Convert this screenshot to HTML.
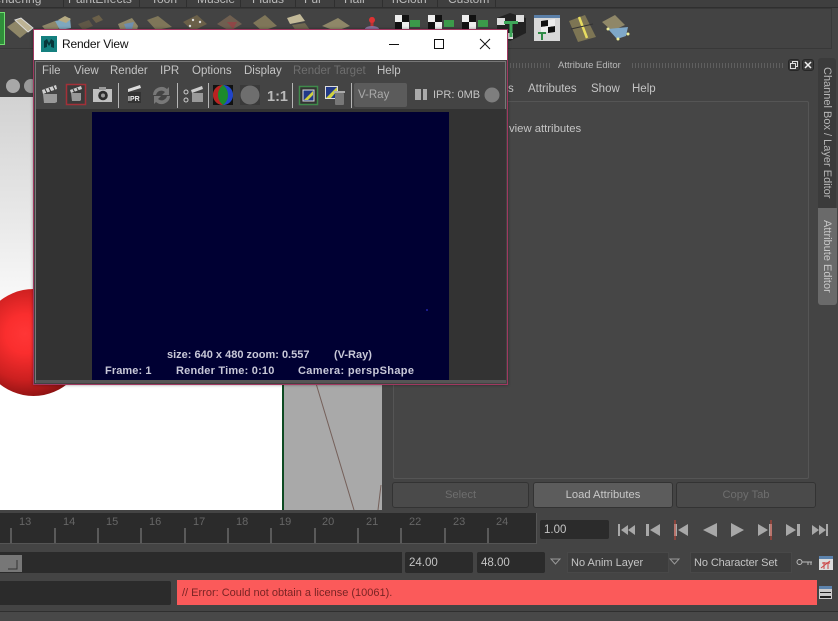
<!DOCTYPE html>
<html><head><meta charset="utf-8"><style>
html,body{margin:0;padding:0;background:#444}
#r{position:relative;width:838px;height:621px;overflow:hidden;background:#444;font-family:"Liberation Sans",sans-serif;font-size:11.5px;color:#c4c4c4}
#r div,#r span.a,#r svg{position:absolute}
.t{white-space:nowrap;line-height:14px}
.f{background:#2b2b2b;border-radius:2px}
.b{background:#4a4a4a;border:1px solid #333;border-radius:3px;text-align:center;line-height:24px;color:#6e6e6e;box-sizing:border-box;height:26px;top:482px;font-size:11.2px}
.o{font-size:11px;font-weight:700;color:#c8c8d8}
.dots{height:5px;background:repeating-linear-gradient(90deg,#5f5f5f 0 1px,transparent 1px 3px)}
</style></head><body><div id="r">
<!-- shelf tabs -->
<div style="left:0;top:0;width:838px;height:7px;background:#3f3f3f;border-bottom:1px solid #2f2f2f"></div>
<div class="t" style="left:-14px;top:-8px;color:#bbb;font-size:12px">Rendering</div>
<div class="t" style="left:68px;top:-8px;color:#bbb;font-size:12px">PaintEffects</div>
<div class="t" style="left:151px;top:-8px;color:#bbb;font-size:12px">Toon</div>
<div class="t" style="left:197px;top:-8px;color:#bbb;font-size:12px">Muscle</div>
<div class="t" style="left:252px;top:-8px;color:#bbb;font-size:12px">Fluids</div>
<div class="t" style="left:304px;top:-8px;color:#bbb;font-size:12px">Fur</div>
<div class="t" style="left:344px;top:-8px;color:#bbb;font-size:12px">Hair</div>
<div class="t" style="left:392px;top:-8px;color:#bbb;font-size:12px">nCloth</div>
<div class="t" style="left:448px;top:-8px;color:#bbb;font-size:12px">Custom</div>
<svg style="left:0;top:0" width="520" height="8"><path d="M63.500 0v7M139.500 0v7M186.500 0v7M240.500 0v7M295.500 0v7M334.500 0v7M382.500 0v7M437.500 0v7M495.500 0v7" stroke="#2f2f2f"/></svg>
<div style="left:0;top:8px;width:832px;height:41px;border:1px solid #383838;border-left:0;box-sizing:border-box;background:#434343"></div>
<div style="left:-6px;top:12px;width:9px;height:31px;background:#2f8f3a;border:1px solid #6fdc6f"></div>
<!-- shelf icons -->
<svg style="left:0;top:0;filter:blur(.35px)" width="640" height="50" viewBox="0 0 640 50">
<g fill="#8f8768">
<path d="M7 27 17 20 30 30 20 38Z"/><path d="M15 20 21 18 33 28 28 32Z" fill="#bdb394" stroke="#ddd"/>
<path d="M42 26 55 21 60 28 48 33Z"/><path d="M55 21 70 18 71 28 60 30Z" fill="#7fa8bf"/><path d="M58 20 65 16 71 19 66 23Z" fill="#b5aa82"/>
<path d="M78 24 89 20 93 26 83 30Z" fill="#5f5746"/><path d="M92 18 99 15 103 20 96 23Z" fill="#6b6049"/>
<path d="M118 24 132 18 138 26 136 34 122 34Z"/><path d="M124 24 134 22 132 29 126 29Z" fill="#6e8eb0"/>
<path d="M147 20 158 16 172 27 156 30Z" fill="#7f7659"/>
<path d="M183 22 197 15 207 24 193 31Z" fill="#6b6049"/><circle cx="193" cy="20" r="1.200" fill="#ddd"/><circle cx="200" cy="22" r="1.200" fill="#ddd"/><circle cx="190" cy="26" r="1.200" fill="#ddd"/>
<path d="M217 24 230 15 242 24 230 31Z" fill="#6f5f50"/><path d="M227 22 237 22 233 29Z" fill="#8f4747"/>
<path d="M253 23 265 15 277 26 262 31Z" fill="#7f7659"/>
<path d="M287 18 300 14 305 21 290 24Z" fill="#c2b998"/><path d="M292 25 305 23 310 30 296 31Z" fill="#6f6750"/>
<path d="M322 26 338 18 350 26 336 31Z" fill="#8f8768"/>
</g>
<path d="M372 17v14" stroke="#b33" stroke-width="3"/><circle cx="372" cy="20" r="3" fill="#d33"/><ellipse cx="372" cy="29" rx="7" ry="3" fill="#8a74a0"/>
<rect x="395" y="15" width="7" height="7" fill="#eee"/><rect x="402" y="22" width="7" height="7" fill="#eee"/><rect x="402" y="15" width="7" height="7" fill="#111"/><rect x="395" y="22" width="7" height="7" fill="#111"/><rect x="410" y="20" width="10" height="7" fill="#3c9a4a"/>
<rect x="428" y="15" width="7" height="7" fill="#eee"/><rect x="435" y="22" width="7" height="7" fill="#eee"/><rect x="435" y="15" width="7" height="7" fill="#111"/><rect x="428" y="22" width="7" height="7" fill="#111"/><rect x="444" y="20" width="10" height="7" fill="#3c9a4a"/>
<rect x="462" y="15" width="7" height="7" fill="#eee"/><rect x="469" y="22" width="7" height="7" fill="#eee"/><rect x="469" y="15" width="7" height="7" fill="#111"/><rect x="462" y="22" width="7" height="7" fill="#111"/><rect x="478" y="20" width="10" height="7" fill="#3c9a4a"/>
<path d="M497 18 510 13 526 18 526 33 510 41 497 33Z" fill="#222"/><path d="M497 18h8v7h-8zM516 15h8v7h-8zM505 33h8v6h-8z" fill="#ddd"/><path d="M504 21h14v3h-5.500v13h-3v-13h-5.500z" fill="#3fa85a"/>
<rect x="534" y="15" width="26" height="26" fill="#d8d8d8"/><rect x="534" y="15" width="26" height="3" fill="#5a7fa8"/><path d="M541 21l7-1v6l-7 1zM548 27l7-1v6l-7 1z" fill="#111"/><path d="M548 20l7-1v7l-7 1zM541 27l7-1v6l-7 1z" fill="#eee"/><path d="M538 32h8v2h-3v6h-2v-6h-3z" fill="#2e8a45"/>
<path d="M569 21 585 15 596 37 578 42Z" fill="#7d7554"/><path d="M579 17 587 38" stroke="#e8dd60" stroke-width="2.500"/><path d="M571 29 593 24" stroke="#333"/>
<path d="M602 22 615 15 625 25 612 31Z" fill="#8f8768"/><path d="M608 29 628 27 626 36 617 39Z" fill="#7fa8c8"/><circle cx="608" cy="29" r="1.500" fill="#ee9"/><circle cx="628" cy="34" r="1.500" fill="#ee9"/><circle cx="618" cy="39" r="1.500" fill="#ee9"/>
</svg>
<!-- viewport header -->
<div style="left:0;top:50px;width:385px;height:47px;background:#424242"></div>
<div style="left:6px;top:79px;width:14px;height:14px;border-radius:50%;background:#a8a8a8"></div>
<div style="left:24px;top:79px;width:14px;height:14px;border-radius:50%;background:#999"></div>
<!-- viewport -->
<div style="left:0;top:97px;width:283px;height:413px;background:linear-gradient(#d2d2d2 0,#eaeaea 130px,#fff 230px,#fff 100%)"></div>
<div style="left:282px;top:97px;width:2px;height:414px;background:#0d4a22"></div>
<div style="left:284px;top:97px;width:98px;height:413px;background:#a9a9a9"></div>
<svg style="left:284px;top:380px" width="98" height="131"><path d="M31 0 70 130" stroke="#75605a" fill="none"/><path d="M97 105 94 130" stroke="#75605a" fill="none"/></svg>
<div style="left:-20px;top:289px;width:107px;height:107px;border-radius:50%;background:radial-gradient(circle at 42% 42%,#ff3636 0,#fa2e2e 22%,#cc2020 52%,#7a0e0e 80%,#2a0303 100%)"></div>
<!-- attribute editor -->
<div style="left:382px;top:50px;width:456px;height:460px;background:#444"></div>
<div class="t" style="left:558px;top:59px;font-size:9.500px;color:#b8b8b8">Attribute Editor</div>
<div class="dots" style="left:510px;top:63px;width:42px"></div>
<div class="dots" style="left:632px;top:63px;width:152px"></div>
<div style="left:788px;top:59px;width:12px;height:12px;background:#3a3a3a;border-radius:3px;border:1px solid #262626;box-sizing:border-box"></div>
<svg style="left:788px;top:59px" width="12" height="12"><path d="M4.500 4.500V2.500h5v5h-2M2.500 4.500h5v5h-5z" stroke="#ddd" fill="none"/></svg>
<div style="left:802px;top:59px;width:12px;height:12px;background:#3a3a3a;border-radius:3px;border:1px solid #262626;box-sizing:border-box"></div>
<svg style="left:802px;top:59px" width="12" height="12"><path d="M3 3l6 6M9 3l-6 6" stroke="#eee" stroke-width="1.500"/></svg>
<div class="t" style="left:508px;top:82px">s</div>
<div class="t" style="left:528px;top:82px">Attributes</div>
<div class="t" style="left:591px;top:82px">Show</div>
<div class="t" style="left:632px;top:82px">Help</div>
<div style="left:393px;top:101px;width:416px;height:378px;border:1px solid #555;border-radius:2px;box-sizing:border-box;background:#464646"></div>
<div class="t" style="left:509px;top:122px;font-size:11.300px">view attributes</div>
<div style="left:818px;top:58px;width:18px;height:150px;background:#3b3b3b;border-radius:3px 3px 0 0"></div>
<div class="t" style="left:819px;top:67px;writing-mode:vertical-rl;color:#b8b8b8;line-height:16px;font-size:11px">Channel Box / Layer Editor</div>
<div style="left:818px;top:208px;width:19px;height:97px;background:#6a6a6a;border-radius:0 0 3px 3px"></div>
<div class="t" style="left:819px;top:220px;writing-mode:vertical-rl;color:#c8c8c8;line-height:16px;font-size:11px">Attribute Editor</div>
<div class="b" style="left:392px;width:137px">Select</div>
<div class="b" style="left:533px;width:140px;background:#5c5c5c;color:#c8c8c8">Load Attributes</div>
<div class="b" style="left:676px;width:140px">Copy Tab</div>
<!-- time slider -->
<div style="left:0;top:510px;width:838px;height:111px;background:#444"></div>
<div style="left:0;top:513px;width:537px;height:31px;background:#2b2b2b;border-right:1px solid #555;box-sizing:border-box"></div>
<div style="left:0;top:543px;width:537px;height:1px;background:#555"></div>
<svg style="left:0;top:513px" width="537" height="31"><g fill="#666" font-family="Liberation Sans" font-size="11">
<text x="19" y="12">13</text><text x="63" y="12">14</text><text x="106" y="12">15</text><text x="149" y="12">16</text><text x="193" y="12">17</text><text x="236" y="12">18</text><text x="279" y="12">19</text><text x="322" y="12">20</text><text x="366" y="12">21</text><text x="409" y="12">22</text><text x="453" y="12">23</text><text x="496" y="12">24</text></g>
<path d="M11 15v15M55 15v15M98 15v15M141 15v15M185 15v15M228 15v15M271 15v15M315 15v15M358 15v15M401 15v15M445 15v15M488 15v15" stroke="#6a6a6a" stroke-width="1.500"/></svg>
<div class="f" style="left:540px;top:520px;width:69px;height:19px"></div>
<div class="t" style="left:544px;top:523px">1.00</div>
<svg style="left:612px;top:516px" width="226" height="28" fill="#a8a8a8">
<path d="M6 8h2v12H6zM9 14l7-5v10zM16 14l7-5v10z"/>
<path d="M34 8h3v12h-3zM38 14l10-6v12z"/>
<path d="M62 8h3v12h-3zM66 14l10-6v12z"/><path d="M63 4v20" stroke="#c43" fill="none"/>
<path d="M91 14l14-7v14z"/>
<path d="M119 7l13 7-13 7z"/>
<path d="M146 8l10 6-10 6zM157 8h3v12h-3z"/><path d="M159 4v20" stroke="#c43" fill="none"/>
<path d="M174 8l10 6-10 6zM185 8h3v12h-3z"/>
<path d="M200 9l7 5-7 5zM207 9l7 5-7 5zM214 8h2v12h-2z"/></svg>
<!-- range -->
<div style="left:0;top:552px;width:402px;height:21px;background:#2b2b2b"></div>
<div style="left:0;top:555px;width:22px;height:17px;background:#777"></div>
<svg style="left:0;top:555px" width="22" height="17"><path d="M17 5v9h-9" stroke="#333" fill="none"/></svg>
<div class="f" style="left:405px;top:552px;width:68px;height:21px"></div>
<div class="t" style="left:409px;top:556px">24.00</div>
<div class="f" style="left:477px;top:552px;width:68px;height:21px"></div>
<div class="t" style="left:481px;top:556px">48.00</div>
<svg style="left:550px;top:558px" width="130" height="9" fill="none" stroke="#999"><path d="M1 1h9l-4.500 5z"/><path d="M120 1h9l-4.500 5z"/></svg>
<div style="left:567px;top:552px;width:102px;height:21px;background:#3d3d3d;border:1px solid #484848;box-sizing:border-box"></div>
<div class="t" style="left:571px;top:556px;font-size:11px">No Anim Layer</div>
<div style="left:690px;top:552px;width:102px;height:21px;background:#3d3d3d;border:1px solid #484848;box-sizing:border-box"></div>
<div class="t" style="left:694px;top:556px;font-size:11px;letter-spacing:-.1px">No Character Set</div>
<svg style="left:796px;top:558px" width="18" height="9" fill="none" stroke="#bbb"><circle cx="3.500" cy="4" r="2.500"/><path d="M6 4h10M12 4v3M15 4v3"/></svg>
<div style="left:819px;top:556px;width:14px;height:14px;background:#ddd;border-top:3px solid #5c83ad;box-sizing:border-box"></div>
<svg style="left:819px;top:559px" width="14" height="11"><path d="M2 9 11 2M3 4h8M5 3v7M9 3v7" stroke="#c44" fill="none"/></svg>
<!-- command -->
<div style="left:0;top:581px;width:171px;height:24px;background:#2b2b2b;border-radius:0 2px 2px 0"></div>
<div style="left:177px;top:580px;width:640px;height:25px;background:#fb5a5a"></div>
<div class="t" style="left:182px;top:586px;color:#7a2424;font-size:11px">// Error: Could not obtain a license (10061).</div>
<div style="left:819px;top:586px;width:13px;height:13px;background:#ccc;border-top:3px solid #5c83ad;box-sizing:border-box"></div>
<div style="left:820px;top:592px;width:11px;height:1px;background:#222"></div>
<div style="left:820px;top:596px;width:11px;height:2px;background:#222"></div>
<div style="left:0;top:611px;width:838px;height:1px;background:#2f2f2f"></div>
<div style="left:0;top:612px;width:838px;height:9px;background:#484848"></div>
<!-- render view window -->
<div style="left:33px;top:29px;width:475px;height:356px;background:#424242;border:1px solid #a03860;box-sizing:border-box;box-shadow:0 0 3px rgba(0,0,0,.4)"></div>
<div style="left:34px;top:30px;width:473px;height:30px;background:#fff"></div>
<svg style="left:41px;top:36px" width="16" height="16"><rect width="16" height="16" fill="#15807f"/><path d="M3 12V5l3-2 2 4 2-4 3 2v7l-3-1V7l-2 3-2-3v4z" fill="#08363a"/></svg>
<div class="t" style="left:62px;top:37px;color:#111;font-size:12px;letter-spacing:-.2px">Render View</div>
<div style="left:389px;top:44px;width:10px;height:1px;background:#111"></div>
<div style="left:434px;top:39px;width:10px;height:10px;border:1px solid #111;box-sizing:border-box"></div>
<svg style="left:479px;top:38px" width="12" height="12"><path d="M1 1l10 10M11 1 1 11" stroke="#111" fill="none"/></svg>
<div style="left:35px;top:61px;width:471px;height:322px;background:#444;border:1px solid #777;border-bottom:0;box-sizing:border-box"></div>
<div class="t" style="left:42px;top:64px">File</div>
<div class="t" style="left:74px;top:64px">View</div>
<div class="t" style="left:110px;top:64px">Render</div>
<div class="t" style="left:160px;top:64px">IPR</div>
<div class="t" style="left:192px;top:64px">Options</div>
<div class="t" style="left:244px;top:64px">Display</div>
<div class="t" style="left:293px;top:64px;color:#6e6e6e">Render Target</div>
<div class="t" style="left:377px;top:64px">Help</div>
<!-- render toolbar -->
<svg style="left:36px;top:82px" width="470" height="26">
<!-- clapper 1 -->
<path d="M6 8 20 3l1 4-14 5z" fill="#d0d0d0"/><path d="M9 7l2 4M13 6l2 4M17 4l2 4" stroke="#333"/><path d="M7 12h14v8l-2 1H8z" fill="#9a9a9a"/>
<!-- clapper 2 -->
<rect x="30.500" y="2.500" width="19" height="20" fill="#3a3a3a" stroke="#a33038" stroke-width="1.500"/><path d="M34 8 45 4l1 3-11 4z" fill="#ccc"/><path d="M37 7l1.500 3M41 6l1.500 3" stroke="#333"/><path d="M35 11h10v7l-1 1H36z" fill="#999"/>
<!-- camera -->
<rect x="57" y="7" width="19" height="13" fill="#c0c0c0"/><rect x="63" y="5" width="7" height="3" fill="#999"/><circle cx="67" cy="13.500" r="4.800" fill="#2c2c2c"/><circle cx="67" cy="13.500" r="2" fill="#999"/>
<!-- IPR clapper -->
<path d="M92 7 104 3l1 3-13 4z" fill="#ddd"/><rect x="92" y="10" width="13" height="11" fill="#333"/><text x="92" y="19" font-size="7" font-weight="700" fill="#eee" font-family="Liberation Sans">IPR</text>
<!-- refresh -->
<path d="M117 13a8.500 8.500 0 0 1 14-6l2-2v8h-7l3-3a5.500 5.500 0 0 0-9 3zM134 14a8.500 8.500 0 0 1-14 6l-2 2v-8h7l-3 3a5.500 5.500 0 0 0 9-3z" fill="#787878"/>
<!-- dots clapper -->
<circle cx="150" cy="10" r="2" fill="none" stroke="#ccc"/><circle cx="150" cy="18" r="2" fill="none" stroke="#ccc"/><path d="M155 8 166 4l1 3-11 4z" fill="#ccc"/><path d="M156 11h11v9H156z" fill="#999"/>
<path d="M82.500 1v25M141.500 1v25M172.500 1v25M256.500 1v25M315.500 1v25" stroke="#b5b5b5" fill="none"/>
<rect x="177" y="3" width="20" height="20" fill="#111"/><circle cx="187" cy="13" r="10" fill="#1c8a2c"/><path d="M187 3a10 10 0 0 0 0 20c-4-3-5-7-5-10s1-7 5-10z" fill="#bb2222"/><path d="M187 3a10 10 0 0 1 0 20c4-3 5-7 5-10s-1-7-5-10z" fill="#2244cc"/>
<rect x="204" y="3" width="20" height="20" fill="#3a3a3a"/><circle cx="214" cy="13" r="9.500" fill="#6e6e6e"/>
<text x="231" y="19" font-size="14.500" font-weight="700" fill="#bbb" font-family="Liberation Sans">1:1</text>
<rect x="263.500" y="4.500" width="18" height="18" fill="#333" stroke="#3f8a4a" stroke-width="1.500"/><rect x="267" y="8" width="11" height="11" fill="#223a88" stroke="#ddd"/><path d="M268 18 277 9v4l-5 5z" fill="#cfd040"/>
<rect x="289.500" y="4.500" width="12" height="12" fill="#223a88" stroke="#ddd"/><path d="M290 16 301 5v4l-6 7z" fill="#cfd040"/><rect x="299" y="11" width="9" height="12" rx="1" fill="#777"/><rect x="298" y="9" width="11" height="2" fill="#aaa"/>
<path d="M379 7h6v11h-6zM387 7h4v11h-4z" fill="#aaa"/>
<circle cx="456" cy="13" r="7.500" fill="#7e7e7e"/>
</svg>
<div style="left:354px;top:83px;width:53px;height:24px;background:#5b5b5b;border-radius:2px"></div>
<div class="t" style="left:358px;top:88px;color:#aaa">V-Ray</div>
<div class="t" style="left:433px;top:88px;font-size:11px">IPR: 0MB</div>
<!-- render area -->
<div style="left:36px;top:109px;width:470px;height:274px;background:#333"></div>
<div style="left:92px;top:112px;width:357px;height:268px;background:#000033"></div>
<div style="left:426px;top:309px;width:2px;height:2px;background:#1a1a88"></div>
<div class="t o" style="left:167px;top:348px">size: 640 x 480 zoom: 0.557</div>
<div class="t o" style="left:334px;top:348px">(V-Ray)</div>
<div class="t o" style="left:105px;top:364px;letter-spacing:.1px">Frame: 1</div>
<div class="t o" style="left:176px;top:364px;letter-spacing:.2px">Render Time: 0:10</div>
<div class="t o" style="left:298px;top:364px;letter-spacing:.35px">Camera: perspShape</div>
<div style="left:36px;top:380px;width:470px;height:3px;background:#555"></div>
</div></body></html>
